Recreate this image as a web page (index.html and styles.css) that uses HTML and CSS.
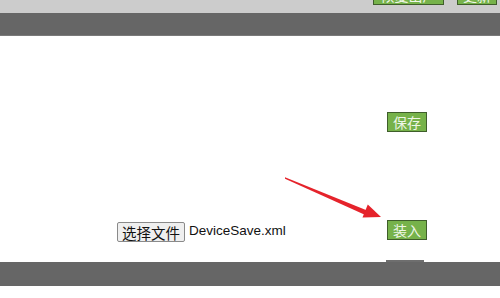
FILE: index.html
```html
<!DOCTYPE html>
<html>
<head>
<meta charset="utf-8">
<link rel="stylesheet" href="styles.css">
</head>
<body>
<div class="topbar">
  <button class="gbtn top-wide">恢复出厂</button>
  <button class="gbtn">更新</button>
</div>
<div class="navbar"></div>
<div class="main">
  <div class="row row-save">
    <button class="gbtn">保存</button>
  </div>
  <div class="row row-load">
    <button class="filebtn">选择文件</button>
    <span class="filename">DeviceSave.xml</span>
    <button class="gbtn load">装入</button>
  </div>
  <svg class="arrow" width="500" height="226" viewBox="0 0 500 226">
    <polygon points="285,141.3 369,175.2 367,179.8 285,142.7" fill="#e5232b"/>
    <polygon points="381,181 362.5,181.5 367.8,168.5" fill="#e5232b"/>
  </svg>
</div>
<div class="footbar">
  <div class="tab"></div>
</div>
</body>
</html>
```
FILE: styles.css
```css
html, body {
  margin: 0;
  padding: 0;
  background: #ffffff;
  font-family: "Noto Sans CJK SC", "Liberation Sans", sans-serif;
  overflow: hidden;
}

.gbtn {
  box-sizing: border-box;
  width: 40px;
  height: 20px;
  padding: 0;
  background: #76b24a;
  border: 1px solid #3f5e2b;
  border-radius: 0;
  color: #eef6e6;
  font-family: "Noto Sans CJK SC", sans-serif;
  font-size: 14px;
  line-height: 17px;
  text-align: center;
  white-space: nowrap;
}

.topbar {
  height: 13px;
  background: #cccccc;
  display: flex;
  justify-content: flex-end;
  align-items: flex-start;
  gap: 13px;
  padding-right: 3px;
}

.topbar .gbtn {
  margin-top: -15px;
}

.topbar .top-wide {
  width: 71px;
}

.navbar {
  height: 22px;
  background: #666666;
  border-bottom: 1px solid #7a7a7a;
}

.main {
  position: relative;
  height: 226px;
}

.row {
  display: flex;
  align-items: flex-start;
  padding-right: 73px;
}

.row-save {
  justify-content: flex-end;
  padding-top: 76px;
}

.row-load {
  margin-top: 88px;
  padding-left: 117px;
}

.filebtn {
  box-sizing: border-box;
  width: 68px;
  height: 20px;
  margin-top: 2px;
  padding: 0;
  background: #efefef;
  border: 1px solid #8a8a8a;
  border-radius: 2px;
  color: #111111;
  font-family: "Noto Sans CJK SC", sans-serif;
  font-size: 14.5px;
  line-height: 17px;
  white-space: nowrap;
}

.filename {
  margin-left: 4px;
  margin-top: 3px;
  font-family: "Liberation Sans", Arial, sans-serif;
  font-size: 13.5px;
  line-height: 16px;
  color: #111111;
}

.load {
  margin-left: auto;
}

.arrow {
  position: absolute;
  left: 0;
  top: 0;
}

.footbar {
  height: 24px;
  background: #666666;
  position: relative;
}

.tab {
  position: absolute;
  left: 386px;
  top: -2px;
  width: 38px;
  height: 2px;
  background: #6e6e6e;
}
```
